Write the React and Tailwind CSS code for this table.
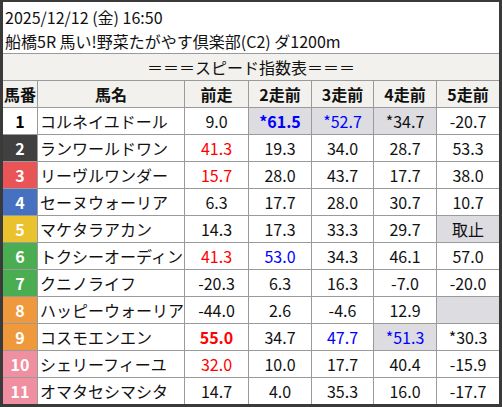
const rows = [
  { no: 1, name: 'コルネイユドール', frame: 'bg-white text-black', cells: [
    { v: '9.0' }, { v: '*61.5', c: 'text-[#0000ff] font-bold', bg: true }, { v: '*52.7', c: 'text-[#0000ff]', bg: true }, { v: '*34.7', bg: true }, { v: '-20.7' },
  ] },
  { no: 2, name: 'ランワールドワン', frame: 'bg-[#404040] text-white', cells: [
    { v: '41.3', c: 'text-[#ff0000]' }, { v: '19.3' }, { v: '34.0' }, { v: '28.7' }, { v: '53.3' },
  ] },
  { no: 3, name: 'リーヴルワンダー', frame: 'bg-[#e95556] text-white', cells: [
    { v: '15.7', c: 'text-[#ff0000]' }, { v: '28.0' }, { v: '43.7' }, { v: '17.7' }, { v: '38.0' },
  ] },
  { no: 4, name: 'セーヌウォーリア', frame: 'bg-[#4571c0] text-white', cells: [
    { v: '6.3' }, { v: '17.7' }, { v: '28.0' }, { v: '30.7' }, { v: '10.7' },
  ] },
  { no: 5, name: 'マケタラアカン', frame: 'bg-[#e9c22e] text-white', cells: [
    { v: '14.3' }, { v: '17.3' }, { v: '33.3' }, { v: '29.7' }, { v: '取止', bg: true },
  ] },
  { no: 6, name: 'トクシーオーディン', frame: 'bg-[#4aad52] text-white', cells: [
    { v: '41.3', c: 'text-[#ff0000]' }, { v: '53.0', c: 'text-[#0000ff]' }, { v: '34.3' }, { v: '46.1' }, { v: '57.0' },
  ] },
  { no: 7, name: 'クニノライフ', frame: 'bg-[#4aad52] text-white', cells: [
    { v: '-20.3' }, { v: '6.3' }, { v: '16.3' }, { v: '-7.0' }, { v: '-20.0' },
  ] },
  { no: 8, name: 'ハッピーウォーリア', frame: 'bg-[#f0993c] text-white', cells: [
    { v: '-44.0' }, { v: '2.6' }, { v: '-4.6' }, { v: '12.9' }, { v: '', bg: true },
  ] },
  { no: 9, name: 'コスモエンエン', frame: 'bg-[#f0993c] text-white', cells: [
    { v: '55.0', c: 'text-[#ff0000] font-bold' }, { v: '34.7' }, { v: '47.7', c: 'text-[#0000ff]' }, { v: '*51.3', c: 'text-[#0000ff]', bg: true }, { v: '*30.3' },
  ] },
  { no: 10, name: 'シェリーフィーユ', frame: 'bg-[#ef8fa0] text-white', cells: [
    { v: '32.0', c: 'text-[#ff0000]' }, { v: '10.0' }, { v: '17.7' }, { v: '40.4' }, { v: '-15.9' },
  ] },
  { no: 11, name: 'オマタセシマシタ', frame: 'bg-[#ef8fa0] text-white', cells: [
    { v: '14.7' }, { v: '4.0' }, { v: '35.3' }, { v: '16.0' }, { v: '-17.7' },
  ] },
];

const heads = ['馬番', '馬名', '前走', '2走前', '3走前', '4走前', '5走前'];

export default function App() {
  return (
    <div
      className="w-[502px] h-[407px] border-x-[3px] border-t-2 border-b-[3px] border-[#3a3a3a] bg-white text-[16px] text-[#111]"
      style={{ fontFamily: '"Noto Sans CJK JP", "Noto Sans", sans-serif' }}
    >
      <div className="h-[51px] pt-[3px] pl-[2px] leading-[24px]">
        <div>2025/12/12 (金) 16:50</div>
        <div>船橋5R 馬い!野菜たがやす倶楽部(C2) ダ1200m</div>
      </div>
      <div className="grid grid-cols-[34px_146px_63px_62px_61px_62px_62px] gap-px bg-[#9a9a9a] pt-px">
        <div className="col-span-7 h-[26px] bg-[#f2f1ed] flex items-center justify-center leading-none">
          ＝＝＝スピード指数表＝＝＝
        </div>
        {heads.map(h => (
          <div key={h} className="h-[26px] bg-[#f2f1ed] flex items-center justify-center font-bold leading-none">
            {h}
          </div>
        ))}
        {rows.map(r => (
          <div key={r.no} className="contents">
            <div className={`h-[26px] flex items-center justify-center font-bold leading-none ${r.frame}`}>{r.no}</div>
            <div className="h-[26px] bg-white flex items-center pl-[2px] leading-none whitespace-nowrap overflow-hidden">{r.name}</div>
            {r.cells.map((c, i) => (
              <div
                key={i}
                className={`h-[26px] flex items-center justify-center leading-none ${c.bg ? 'bg-[#dcdce1]' : 'bg-white'} ${c.c || ''}`}
              >
                {c.v}
              </div>
            ))}
          </div>
        ))}
      </div>
    </div>
  );
}
